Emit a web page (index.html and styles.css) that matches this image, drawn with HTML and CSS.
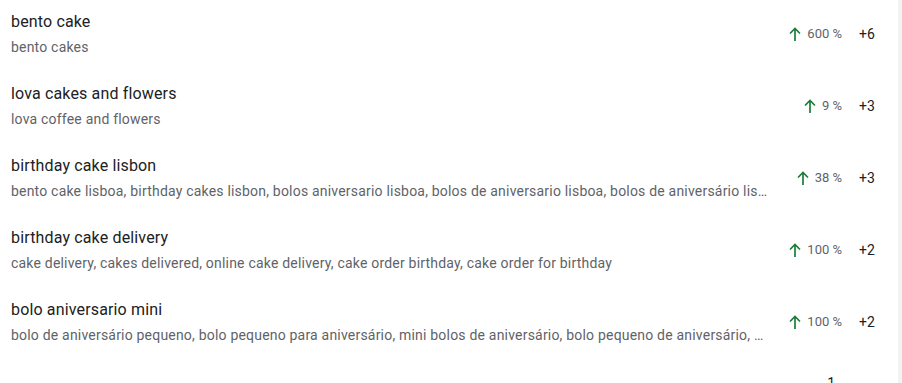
FILE: index.html
```html
<!DOCTYPE html>
<html lang="en">
<head>
<meta charset="utf-8">
<title>Related queries</title>
<link rel="stylesheet" href="styles.css">
</head>
<body>
<div class="frame">
  <div class="list">
    <div class="row">
      <div class="text">
        <div class="title">bento cake</div>
        <div class="sub">bento cakes</div>
      </div>
      <div class="pct"><svg class="up" viewBox="0 0 12 14"><path d="M6 14V1.5M1 6.5L6 1.5L11 6.5"/></svg><span>600 %</span></div>
      <div class="delta">+6</div>
    </div>
    <div class="row">
      <div class="text">
        <div class="title">lova cakes and flowers</div>
        <div class="sub">lova coffee and flowers</div>
      </div>
      <div class="pct"><svg class="up" viewBox="0 0 12 14"><path d="M6 14V1.5M1 6.5L6 1.5L11 6.5"/></svg><span>9 %</span></div>
      <div class="delta">+3</div>
    </div>
    <div class="row">
      <div class="text">
        <div class="title">birthday cake lisbon</div>
        <div class="sub">bento cake lisboa, birthday cakes lisbon, bolos aniversario lisboa, bolos de aniversario lisboa, bolos de aniversário lisboa, bolos de aniversário lisbon</div>
      </div>
      <div class="pct"><svg class="up" viewBox="0 0 12 14"><path d="M6 14V1.5M1 6.5L6 1.5L11 6.5"/></svg><span>38 %</span></div>
      <div class="delta">+3</div>
    </div>
    <div class="row">
      <div class="text">
        <div class="title">birthday cake delivery</div>
        <div class="sub">cake delivery, cakes delivered, online cake delivery, cake order birthday, cake order for birthday</div>
      </div>
      <div class="pct"><svg class="up" viewBox="0 0 12 14"><path d="M6 14V1.5M1 6.5L6 1.5L11 6.5"/></svg><span>100 %</span></div>
      <div class="delta">+2</div>
    </div>
    <div class="row">
      <div class="text">
        <div class="title">bolo aniversario mini</div>
        <div class="sub">bolo de aniversário pequeno, bolo pequeno para aniversário, mini bolos de aniversário, bolo pequeno de aniversário, mini bolo aniversário</div>
      </div>
      <div class="pct"><svg class="up" viewBox="0 0 12 14"><path d="M6 14V1.5M1 6.5L6 1.5L11 6.5"/></svg><span>100 %</span></div>
      <div class="delta">+2</div>
    </div>
    <div class="pager"><span>1</span></div>
  </div>
  <div class="scroll"></div>
</div>
</body>
</html>
```

FILE: styles.css
```css
html, body {
  margin: 0;
  padding: 0;
  background: #ffffff;
  overflow: hidden;
}
body {
  font-family: Roboto, "Liberation Sans", Arial, sans-serif;
  color: #202124;
}
.frame {
  display: flex;
  width: 902px;
  height: 383px;
  overflow: hidden;
}
.list {
  flex: 1;
  min-width: 0;
}
.scroll {
  width: 4px;
  flex: none;
  background: #f1f3f4;
}
.row {
  display: grid;
  grid-template-columns: minmax(0, 1fr) 67px 56px;
  align-items: center;
  height: 72px;
  box-sizing: border-box;
  padding: 10px 0 15px 11px;
}
.text {
  min-width: 0;
  padding-right: 2px;
}
.title {
  font-size: 16px;
  line-height: 24px;
  letter-spacing: 0.15px;
  color: #202124;
  white-space: nowrap;
  overflow: hidden;
  text-overflow: ellipsis;
}
.sub {
  margin-top: 3px;
  font-size: 14px;
  line-height: 20px;
  letter-spacing: 0.2px;
  color: #5f6368;
  white-space: nowrap;
  overflow: hidden;
  text-overflow: ellipsis;
}
.pct {
  display: flex;
  align-items: center;
  justify-content: flex-end;
  gap: 6px;
  font-size: 13px;
  line-height: 16px;
  color: #5f6368;
}
.up {
  width: 12px;
  height: 14px;
  fill: none;
  stroke: #188038;
  stroke-width: 1.7;
}
.delta {
  padding-left: 17px;
  font-size: 14px;
  line-height: 20px;
  color: #202124;
}
.pager {
  display: flex;
  justify-content: flex-end;
  padding: 13px 63px 0 0;
  font-size: 14px;
  line-height: 20px;
  color: #202124;
}
```
